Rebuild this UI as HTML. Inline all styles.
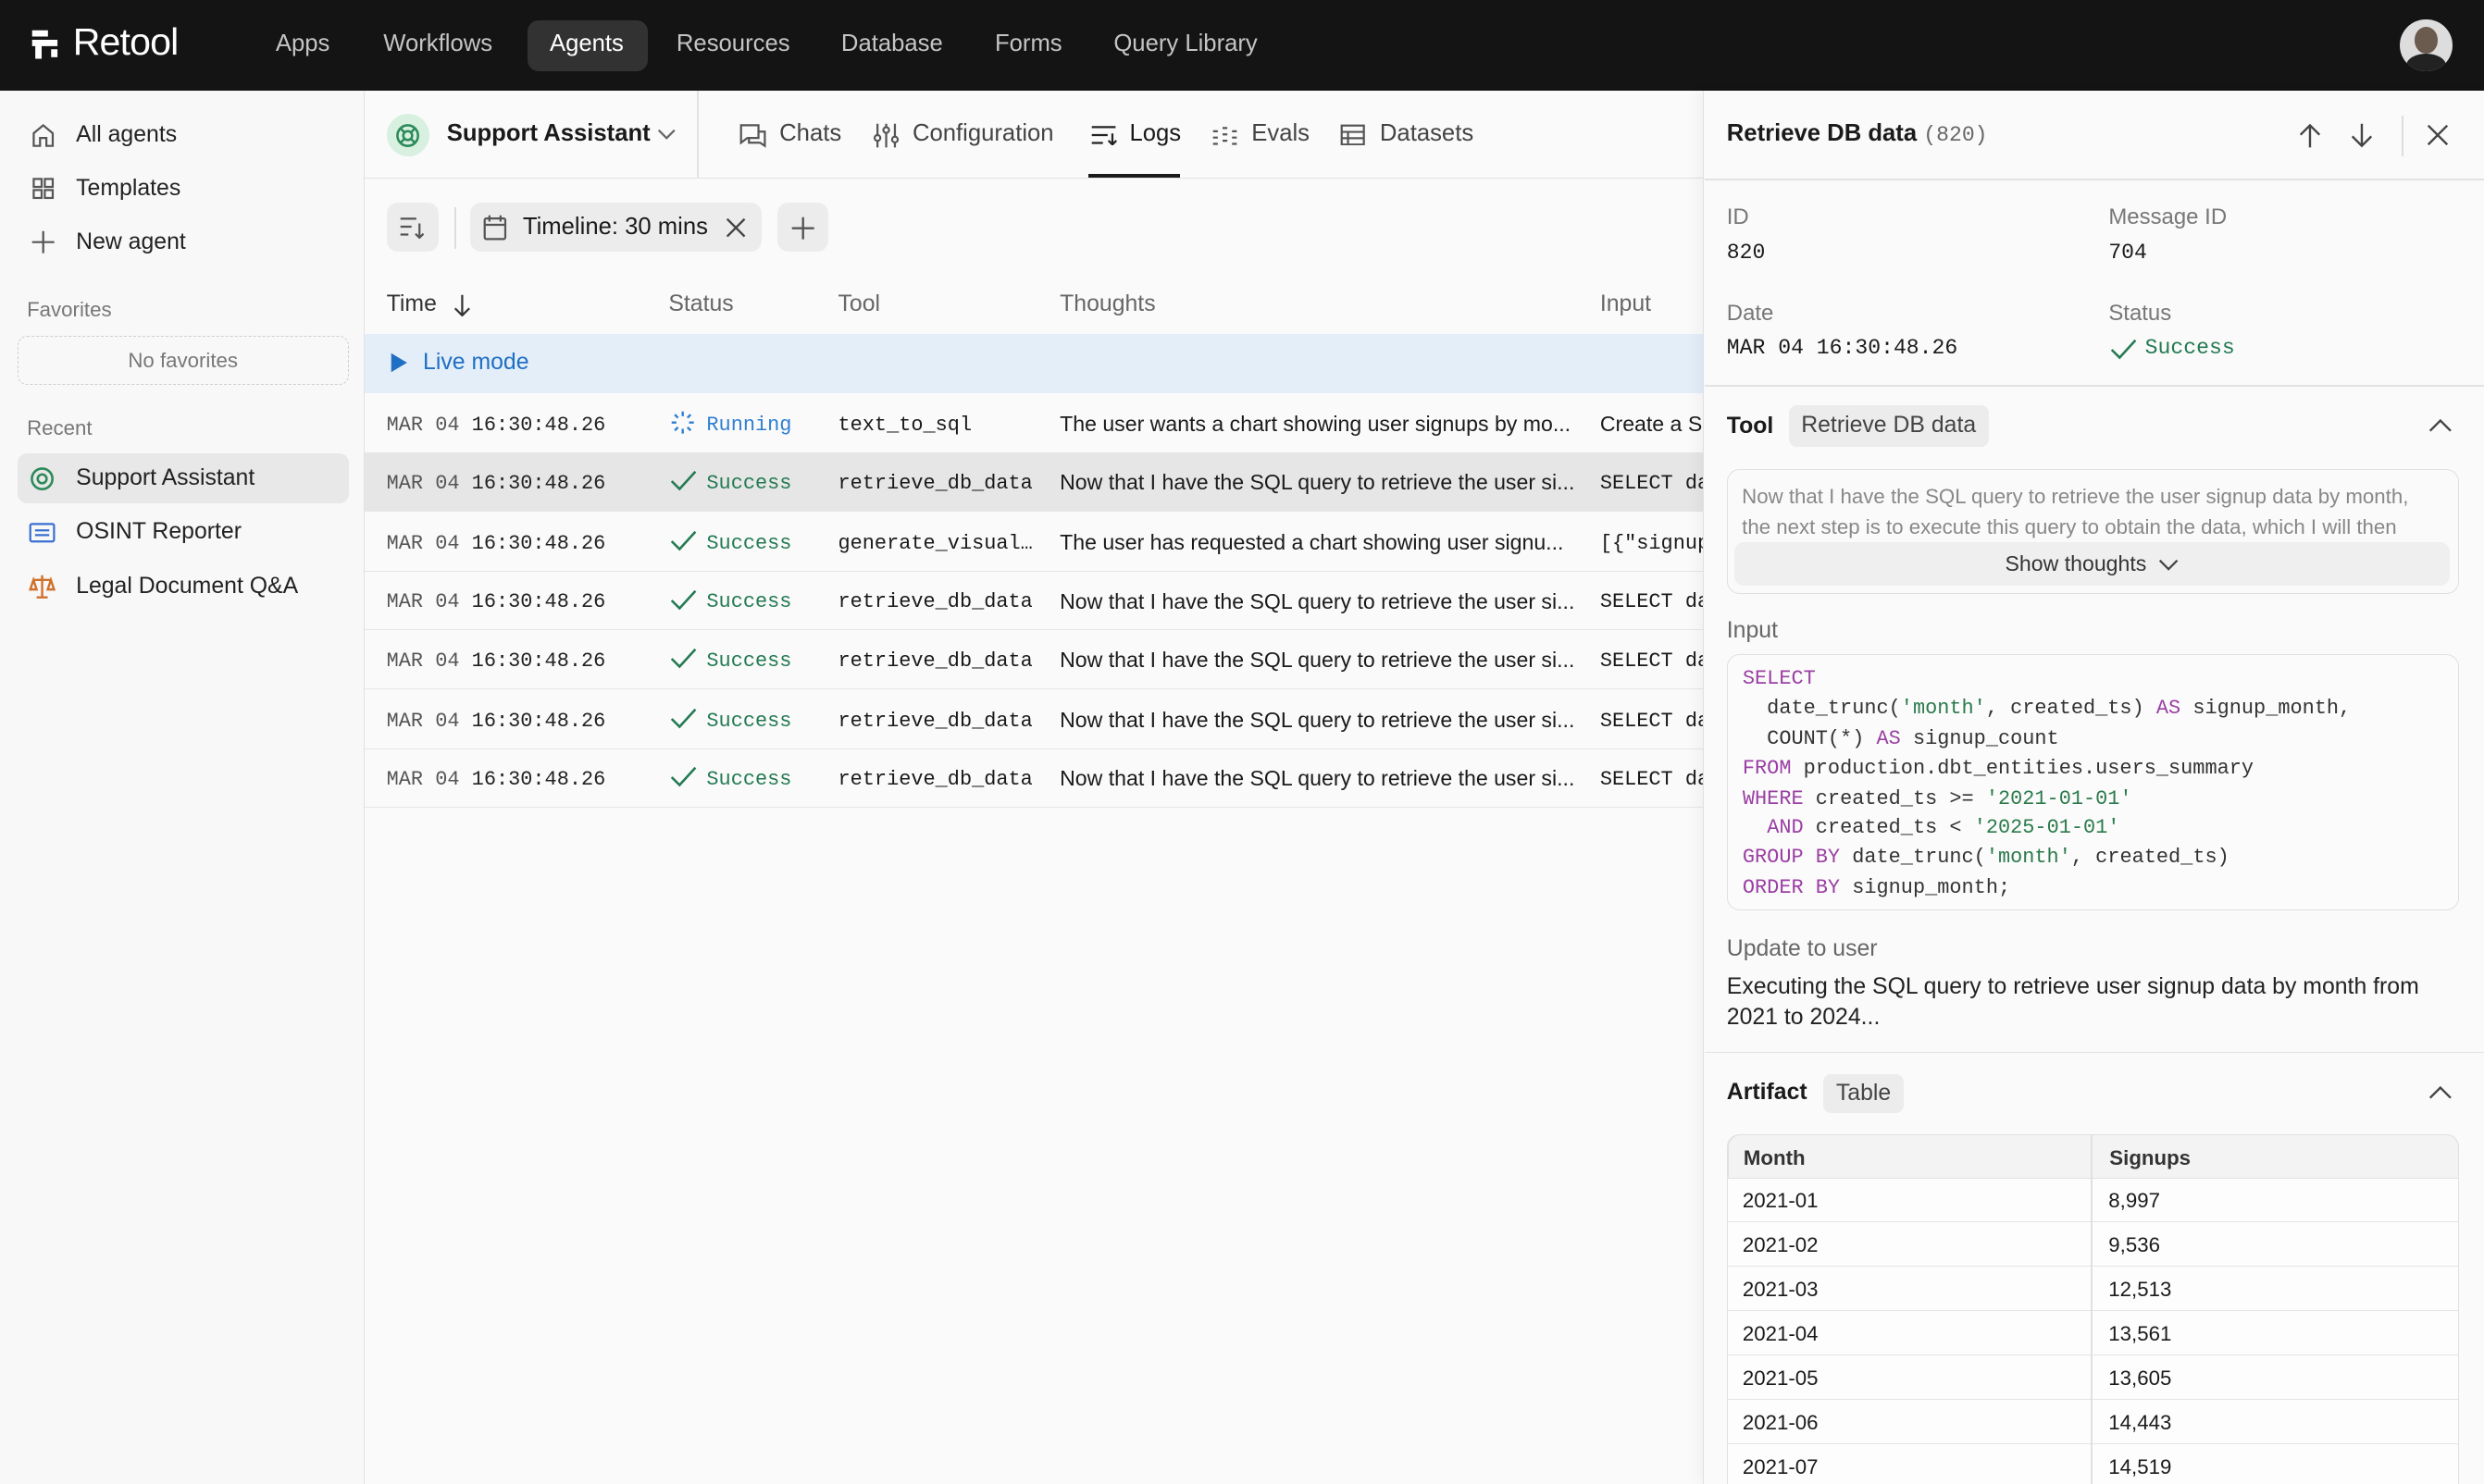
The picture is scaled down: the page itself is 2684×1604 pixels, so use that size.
<!DOCTYPE html>
<html><head><meta charset="utf-8"><style>
*{box-sizing:border-box;margin:0;padding:0}
html,body{width:2684px;height:1604px;overflow:hidden;background:#fafafa}
#w{width:1568px;height:937px;zoom:1.71173;position:relative;font-family:"Liberation Sans",sans-serif;color:#1a1a1a;font-size:14px;background:#fafafa}
.a{position:absolute;white-space:nowrap}
.m{font-family:"Liberation Mono",monospace}
.top{left:0;top:0;width:1568px;height:57px;background:#141414}
.nav{top:19px;color:#c4c4c4;font-size:15px}
.side{left:0;top:57px;width:230px;height:880px;background:#f8f8f8;border-right:1px solid #e2e2e2}
.si{left:48px;font-size:14.5px;color:#222}
.lbl{color:#777;font-size:13px}
.row{left:230px;width:846px;height:37px;border-bottom:1px solid #e6e6e6}
.row span{position:absolute;top:11px;font-size:13.5px}
.row span.m{font-size:12.8px;top:12px}
svg{position:absolute}
.ok{color:#237a53}
.cd{font-size:12.8px;left:1100px;color:#333}
.k{color:#9a3fa3}.s{color:#2b7a4b}
.tr{left:1091px;width:461px;height:28px;border-bottom:1px solid #e4e4e4;font-size:13px}
.tr span{position:absolute;top:7px}
</style></head><body><div id="w">
<div class="a top"></div>
<svg style="left:19px;top:18px" width="20" height="20" viewBox="0 0 20 20"><path d="M1 1h10v4H1zM1 7h16v4H7v8H3v-8H1z" fill="#fff"/><path d="M13 13h4v5h-4z" fill="#fff"/></svg>
<div class="a" style="left:46px;top:13px;color:#fff;font-size:24px;letter-spacing:-0.5px">Retool</div>
<div class="a nav" style="left:174px">Apps</div>
<div class="a nav" style="left:242px">Workflows</div>
<div class="a" style="left:333px;top:13px;width:76px;height:32px;background:#323232;border-radius:7px"></div>
<div class="a nav" style="left:347px;color:#fff">Agents</div>
<div class="a nav" style="left:427px">Resources</div>
<div class="a nav" style="left:531px">Database</div>
<div class="a nav" style="left:628px">Forms</div>
<div class="a nav" style="left:703px">Query Library</div>
<div class="a" style="left:1515px;top:12px;width:33px;height:33px;border-radius:50%;background:#ddd;overflow:hidden"><div style="position:absolute;left:9px;top:5px;width:15px;height:17px;border-radius:50%;background:#6b5a4e"></div><div style="position:absolute;left:4px;top:22px;width:25px;height:15px;border-radius:50%;background:#222"></div></div>

<div class="a side"></div>
<svg style="left:19px;top:77px" width="16" height="16" fill="none" stroke="#555" stroke-width="1.3"><path d="M2 7l6-5 6 5v8H10v-5H6v5H2z"/></svg>
<div class="a si" style="top:77px">All agents</div>
<svg style="left:19px;top:111px" width="16" height="16" fill="none" stroke="#555" stroke-width="1.3"><rect x="2" y="2" width="5" height="5"/><rect x="9" y="2" width="5" height="5"/><rect x="2" y="9" width="5" height="5"/><rect x="9" y="9" width="5" height="5"/></svg>
<div class="a si" style="top:111px">Templates</div>
<svg style="left:19px;top:145px" width="16" height="16" fill="none" stroke="#555" stroke-width="1.3"><path d="M8 1v14M1 8h14"/></svg>
<div class="a si" style="top:145px">New agent</div>
<div class="a lbl" style="left:17px;top:188px">Favorites</div>
<div class="a" style="left:11px;top:212px;width:209px;height:31px;border:1px dashed #cfcfcf;border-radius:6px;text-align:center;line-height:30px;color:#777;font-size:13px">No favorites</div>
<div class="a lbl" style="left:17px;top:263px">Recent</div>
<div class="a" style="left:11px;top:286px;width:209px;height:32px;background:#e8e8e8;border-radius:6px"></div>
<svg style="left:18px;top:294px" width="17" height="17" fill="none" stroke="#2b8a5a" stroke-width="1.5"><circle cx="8.5" cy="8.5" r="6.5"/><circle cx="8.5" cy="8.5" r="2.8"/></svg>
<div class="a si" style="top:294px">Support Assistant</div>
<svg style="left:18px;top:329px" width="17" height="15" fill="none" stroke="#3a6fd1" stroke-width="1.3"><rect x="1" y="2" width="15" height="11" rx="1"/><path d="M4 6h9M4 9h9"/></svg>
<div class="a si" style="top:328px">OSINT Reporter</div>
<svg style="left:18px;top:362px" width="17" height="16" fill="none" stroke="#d0702a" stroke-width="1.4"><path d="M8.5 1v14M3 4h11M3 4l-2 6h4zM14 4l-2 6h4zM5 15h7"/></svg>
<div class="a si" style="top:362px">Legal Document Q&amp;A</div>

<div class="a" style="left:230px;top:112px;width:846px;height:1px;background:#e2e2e2"></div>
<div class="a" style="left:440px;top:57px;width:1px;height:56px;background:#e2e2e2"></div>
<div class="a" style="left:244px;top:72px;width:27px;height:27px;border-radius:50%;background:#d8f0e0"></div>
<svg style="left:249px;top:77px" width="17" height="17" fill="none" stroke="#2b8a5a" stroke-width="1.5"><circle cx="8.5" cy="8.5" r="6.5"/><circle cx="8.5" cy="8.5" r="2.8"/><path d="M4 4l2.5 2.5M13 4l-2.5 2.5M4 13l2.5-2.5M13 13l-2.5-2.5"/></svg>
<div class="a" style="left:282px;top:76px;font-size:15px;font-weight:bold">Support Assistant</div>
<svg style="left:415px;top:81px" width="12" height="8" fill="none" stroke="#666" stroke-width="1.3"><path d="M1 1l5 5 5-5"/></svg>
<svg style="left:467px;top:77px" width="17" height="17" fill="none" stroke="#555" stroke-width="1.3"><path d="M1 2h11v8H5l-4 3zM12 6h4v9l-3-2H6v-3"/></svg>
<div class="a" style="left:492px;top:76px;font-size:15px;color:#444">Chats</div>
<svg style="left:551px;top:77px" width="17" height="17" fill="none" stroke="#555" stroke-width="1.3"><path d="M3 1v15M8.5 1v15M14 1v15"/><circle cx="3" cy="10" r="1.8" fill="#fafafa"/><circle cx="8.5" cy="5" r="1.8" fill="#fafafa"/><circle cx="14" cy="11" r="1.8" fill="#fafafa"/></svg>
<div class="a" style="left:576px;top:76px;font-size:15px;color:#444">Configuration</div>
<svg style="left:688px;top:78px" width="17" height="14" fill="none" stroke="#222" stroke-width="1.3"><path d="M1 2h15M1 7h10M1 12h7M14 6v7M11.5 10.5L14 13l2.5-2.5"/></svg>
<div class="a" style="left:713px;top:76px;font-size:15px">Logs</div>
<div class="a" style="left:687px;top:110px;width:58px;height:2px;background:#1a1a1a"></div>
<svg style="left:765px;top:79px" width="17" height="13" fill="none" stroke="#555" stroke-width="1.3"><path d="M1 4h3M1 8h3M1 12h3M7 2h3M7 6h3M7 10h3M13 4h3M13 8h3M13 12h3"/></svg>
<div class="a" style="left:790px;top:76px;font-size:15px;color:#444">Evals</div>
<svg style="left:846px;top:78px" width="16" height="14" fill="none" stroke="#555" stroke-width="1.3"><rect x="1" y="1" width="14" height="12"/><path d="M1 5h14M1 9h14M5 5v8"/></svg>
<div class="a" style="left:871px;top:76px;font-size:15px;color:#444">Datasets</div>

<div class="a" style="left:244px;top:128px;width:33px;height:31px;background:#ececec;border-radius:7px"></div>
<svg style="left:252px;top:136px" width="17" height="15" fill="none" stroke="#555" stroke-width="1.3"><path d="M1 2h10M1 7h7M1 12h5M13 5v9M10.5 11.5L13 14l2.5-2.5"/></svg>
<div class="a" style="left:287px;top:131px;width:1px;height:26px;background:#ddd"></div>
<div class="a" style="left:297px;top:128px;width:184px;height:31px;background:#ececec;border-radius:7px"></div>
<svg style="left:305px;top:135px" width="15" height="17" fill="none" stroke="#555" stroke-width="1.3"><rect x="1" y="3" width="13" height="13" rx="1"/><path d="M1 7h13M4 1v4M11 1v4"/></svg>
<div class="a" style="left:330px;top:135px;font-size:15px"><b style="font-weight:500">Timeline:</b> 30 mins</div>
<svg style="left:458px;top:137px" width="13" height="13" stroke="#444" stroke-width="1.4"><path d="M1 1l11 11M12 1L1 12"/></svg>
<div class="a" style="left:491px;top:128px;width:32px;height:31px;background:#ececec;border-radius:7px"></div>
<svg style="left:499px;top:136px" width="16" height="16" stroke="#555" stroke-width="1.4"><path d="M8 1v14M1 8h14"/></svg>

<div class="a" style="left:244px;top:184px;font-size:14.5px;color:#333">Time</div>
<svg style="left:286px;top:185px" width="11" height="15" fill="none" stroke="#333" stroke-width="1.3"><path d="M5.5 1v13M1 9.5l4.5 4.5 4.5-4.5"/></svg>
<div class="a" style="left:422px;top:184px;font-size:14.5px;color:#666">Status</div>
<div class="a" style="left:529px;top:184px;font-size:14.5px;color:#666">Tool</div>
<div class="a" style="left:669px;top:184px;font-size:14.5px;color:#666">Thoughts</div>
<div class="a" style="left:1010px;top:184px;font-size:14.5px;color:#666">Input</div>
<div class="a" style="left:230px;top:211px;width:846px;height:37px;background:#e3eef9"></div>
<svg style="left:246px;top:222px" width="12" height="14"><path d="M1 1l10 6-10 6z" fill="#1f6fc4"/></svg>
<div class="a" style="left:267px;top:221px;font-size:14.5px;color:#1f6fc4">Live mode</div>

<div class="a row" style="top:249px"><svg style="left:193px;top:10px" width="16" height="16" stroke="#2e7fd0" stroke-width="1.4"><path d="M8 1v3M8 12v3M1 8h3M12 8h3M3 3l2 2M11 11l2 2M13 3l-2 2M3 13l2-2"/></svg><span class="m" style="left:14px;color:#555">MAR 04 <b style="color:#222;font-weight:normal">16:30:48.26</b></span><span class="m" style="left:216px;color:#2e7fd0">Running</span><span class="m" style="left:299px">text_to_sql</span><span style="left:439px">The user wants a chart showing user signups by mo...</span><span style="left:780px">Create a S</span></div>
<div class="a row" style="top:286px;background:#e6e6e6"></div>
<div class="a row" style="top:324px"></div><div class="a row" style="top:361px"></div><div class="a row" style="top:398px"></div><div class="a row" style="top:436px"></div><div class="a row" style="top:473px"></div>
<div id="rows"></div>
<script>
var tops=[286,324,361,398,436,473],h='';
tops.forEach(function(t,i){
var tool=i==1?'generate_visual…':'retrieve_db_data';
var th=i==1?'The user has requested a chart showing user signu...':'Now that I have the SQL query to retrieve the user si...';
var inp=i==1?'[{"signup':'SELECT da';
h+='<div class="a" style="left:230px;top:'+t+'px;width:846px;height:37px">'+
'<svg style="left:193px;top:11px" width="17" height="14" fill="none" stroke="#237a53" stroke-width="1.5"><path d="M1 7l5 5 10-11"/></svg>'+
'<span class="a m" style="left:14px;top:12px;color:#555;font-size:12.8px">MAR 04 <span style="color:#222">16:30:48.26</span></span>'+
'<span class="a m ok" style="left:216px;top:12px;font-size:12.8px">Success</span>'+
'<span class="a m" style="left:299px;top:12px;font-size:12.8px">'+tool+'</span>'+
'<span class="a" style="left:439px;top:11px;font-size:13.5px">'+th+'</span>'+
'<span class="a m" style="left:780px;top:12px;font-size:12.8px;width:66px;overflow:hidden">'+inp+'</span></div>';});
document.getElementById('rows').innerHTML=h;
</script>

<div class="a" style="left:1075px;top:57px;width:493px;height:880px;background:#fafafa;border-left:1px solid #e0e0e0;box-shadow:-4px 0 8px rgba(0,0,0,0.04)"></div>
<div class="a" style="left:1090px;top:76px;font-size:15px;font-weight:bold">Retrieve DB data <span class="m" style="font-weight:normal;color:#666;font-size:13.5px">(820)</span></div>
<svg style="left:1451px;top:77px" width="14" height="17" fill="none" stroke="#444" stroke-width="1.4"><path d="M7 16V2M1 8l6-6 6 6"/></svg>
<svg style="left:1484px;top:77px" width="14" height="17" fill="none" stroke="#444" stroke-width="1.4"><path d="M7 1v14M1 9l6 6 6-6"/></svg>
<div class="a" style="left:1516px;top:73px;width:1px;height:26px;background:#ddd"></div>
<svg style="left:1532px;top:78px" width="14" height="14" stroke="#444" stroke-width="1.4"><path d="M1 1l12 12M13 1L1 13"/></svg>
<div class="a" style="left:1076px;top:113px;width:492px;height:1px;background:#e2e2e2"></div>
<div class="a lbl" style="left:1090px;top:129px;font-size:14px">ID</div>
<div class="a lbl" style="left:1331px;top:129px;font-size:14px">Message ID</div>
<div class="a m" style="left:1090px;top:152px;font-size:13.5px">820</div>
<div class="a m" style="left:1331px;top:152px;font-size:13.5px">704</div>
<div class="a lbl" style="left:1090px;top:190px;font-size:14px">Date</div>
<div class="a lbl" style="left:1331px;top:190px;font-size:14px">Status</div>
<div class="a m" style="left:1090px;top:212px;font-size:13.5px">MAR 04 16:30:48.26</div>
<svg style="left:1332px;top:214px" width="17" height="14" fill="none" stroke="#237a53" stroke-width="1.5"><path d="M1 7l5 5 10-11"/></svg>
<div class="a m ok" style="left:1354px;top:212px;font-size:13.5px">Success</div>
<div class="a" style="left:1076px;top:243px;width:492px;height:1px;background:#e2e2e2"></div>
<div class="a" style="left:1090px;top:261px;font-size:14.5px;font-weight:bold">Tool</div>
<div class="a" style="left:1129px;top:256px;height:26px;padding:0 8px;background:#ececec;border-radius:5px;line-height:26px;font-size:14.5px;color:#444">Retrieve DB data</div>
<svg style="left:1533px;top:264px" width="15" height="9" fill="none" stroke="#444" stroke-width="1.4"><path d="M1 8l6.5-6.5L14 8"/></svg>
<div class="a" style="left:1090px;top:296px;width:462px;height:79px;border:1px solid #e0e0e0;border-radius:8px;overflow:hidden">
<div style="position:absolute;left:9px;top:8px;font-size:13px;color:#888;line-height:19px;white-space:normal;width:440px">Now that I have the SQL query to retrieve the user signup data by month, the next step is to execute this query to obtain the data, which I will then</div>
<div style="position:absolute;left:4px;top:46px;width:452px;height:27px;background:#efefef;border-radius:6px;text-align:center;line-height:27px;font-size:13.5px;color:#333">Show thoughts&nbsp;&nbsp;<svg style="position:relative;top:0" width="13" height="8" fill="none" stroke="#444" stroke-width="1.3"><path d="M1 1l5.5 5.5L12 1"/></svg></div></div>
<div class="a lbl" style="left:1090px;top:390px;font-size:14.5px;color:#666">Input</div>
<div class="a" style="left:1090px;top:413px;width:462px;height:162px;border:1px solid #e0e0e0;border-radius:8px;background:#fbfbfb"></div>
<div class="a m cd" style="top:421px"><span class="k">SELECT</span></div>
<div class="a m cd" style="top:440px">&nbsp;&nbsp;date_trunc(<span class="s">'month'</span>, created_ts) <span class="k">AS</span> signup_month,</div>
<div class="a m cd" style="top:459px">&nbsp;&nbsp;COUNT(*) <span class="k">AS</span> signup_count</div>
<div class="a m cd" style="top:478px"><span class="k">FROM</span> production.dbt_entities.users_summary</div>
<div class="a m cd" style="top:497px"><span class="k">WHERE</span> created_ts &gt;= <span class="s">'2021-01-01'</span></div>
<div class="a m cd" style="top:515px">&nbsp;&nbsp;<span class="k">AND</span> created_ts &lt; <span class="s">'2025-01-01'</span></div>
<div class="a m cd" style="top:534px"><span class="k">GROUP BY</span> date_trunc(<span class="s">'month'</span>, created_ts)</div>
<div class="a m cd" style="top:553px"><span class="k">ORDER BY</span> signup_month;</div>
<div class="a" style="left:1090px;top:591px;font-size:14.5px;color:#666">Update to user</div>
<div class="a" style="left:1090px;top:614px;font-size:14.5px;line-height:19px;white-space:normal;width:460px;color:#222">Executing the SQL query to retrieve user signup data by month from 2021 to 2024...</div>
<div class="a" style="left:1076px;top:664px;width:492px;height:1px;background:#e2e2e2"></div>
<div class="a" style="left:1090px;top:682px;font-size:14.5px;font-weight:bold">Artifact</div>
<div class="a" style="left:1151px;top:678px;height:25px;padding:0 8px;background:#ececec;border-radius:5px;line-height:25px;font-size:14.5px;color:#444">Table</div>
<svg style="left:1533px;top:685px" width="15" height="9" fill="none" stroke="#444" stroke-width="1.4"><path d="M1 8l6.5-6.5L14 8"/></svg>
<div class="a" style="left:1090px;top:716px;width:462px;height:230px;border:1px solid #e0e0e0;border-radius:8px 8px 0 0;background:#fdfdfd"></div>
<div class="a tr" style="top:716px;background:#f3f3f3;border-radius:8px 8px 0 0;border:1px solid #e0e0e0"><span style="left:9px;font-weight:bold;color:#333">Month</span><span style="left:240px;font-weight:bold;color:#333">Signups</span></div>
<div class="a tr" style="top:744px"><span style="left:9px">2021-01</span><span style="left:240px">8,997</span></div>
<div class="a tr" style="top:772px"><span style="left:9px">2021-02</span><span style="left:240px">9,536</span></div>
<div class="a tr" style="top:800px"><span style="left:9px">2021-03</span><span style="left:240px">12,513</span></div>
<div class="a tr" style="top:828px"><span style="left:9px">2021-04</span><span style="left:240px">13,561</span></div>
<div class="a tr" style="top:856px"><span style="left:9px">2021-05</span><span style="left:240px">13,605</span></div>
<div class="a tr" style="top:884px"><span style="left:9px">2021-06</span><span style="left:240px">14,443</span></div>
<div class="a tr" style="top:912px"><span style="left:9px">2021-07</span><span style="left:240px">14,519</span></div>
<div class="a" style="left:1320px;top:716px;width:1px;height:221px;background:#e0e0e0"></div>
</div></body></html>
